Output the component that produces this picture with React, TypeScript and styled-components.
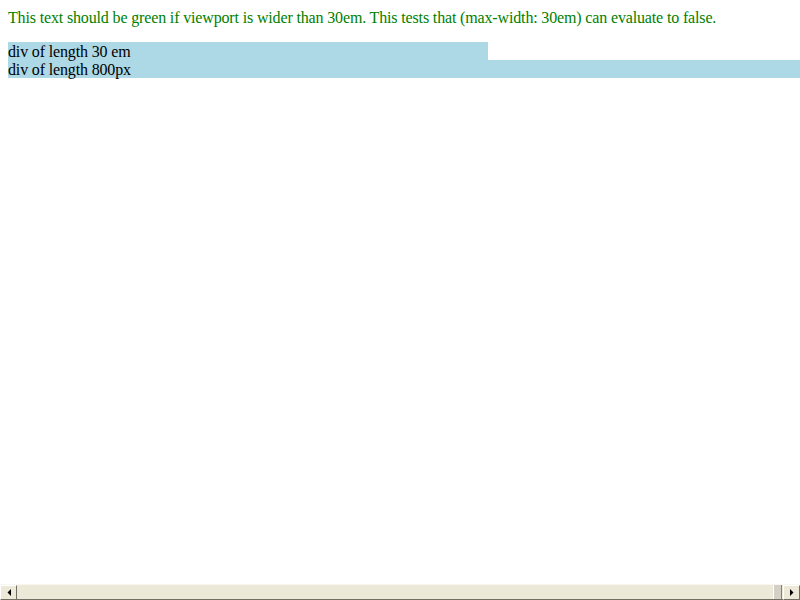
import styled, { createGlobalStyle } from "styled-components";

const GlobalStyle = createGlobalStyle`
  html, body {
    margin: 0;
    padding: 0;
    background: #ffffff;
  }
  body {
    font-family: "Liberation Serif", "Times New Roman", serif;
    font-size: 16px;
    letter-spacing: -0.15px;
    color: #000000;
  }
`;

const Viewport = styled.div`
  display: flex;
  flex-direction: column;
  width: 800px;
  height: 600px;
  overflow: hidden;
`;

const Page = styled.div`
  flex: 1;
  overflow: hidden;
  padding: 8px;
`;

const Note = styled.p`
  margin: 0 0 15px;
  padding-top: 1px;
  line-height: 18px;
  color: #008000;
  white-space: nowrap;
`;

const Bar = styled.div<{ width: string }>`
  width: ${({ width }) => width};
  height: 18px;
  line-height: 19px;
  background: #add8e6;
  white-space: nowrap;
`;

const Scrollbar = styled.div`
  display: flex;
  height: 16px;
  background: #ece9d8;
  border-top: 1px solid #f7f6f0;
  box-sizing: border-box;
`;

const ArrowButton = styled.div`
  width: 17px;
  height: 15px;
  display: flex;
  align-items: center;
  justify-content: center;
  background: #ece9d8;
  border-top: 1px solid #ffffff;
  border-left: 1px solid #ffffff;
  border-right: 1px solid #716f64;
  border-bottom: 1px solid #716f64;
  box-sizing: border-box;
`;

const Track = styled.div`
  flex: 1;
  display: flex;
  justify-content: flex-end;
  border-bottom: 1px solid #716f64;
  box-sizing: border-box;
`;

const Thumb = styled.div`
  width: 9px;
  margin-right: 1px;
  background: #d4d0c8;
  border-left: 1px solid #ffffff;
  border-right: 1px solid #808080;
  box-sizing: border-box;
`;

const Arrow = ({ dir }: { dir: "left" | "right" }) => (
  <svg width="4" height="7" viewBox="0 0 4 7">
    {dir === "left" ? (
      <polygon points="4,0 4,7 0.5,3.5" fill="#000" />
    ) : (
      <polygon points="0,0 0,7 3.5,3.5" fill="#000" />
    )}
  </svg>
);

export default function App() {
  return (
    <>
      <GlobalStyle />
      <Viewport>
        <Page>
          <Note>
            This text should be green if viewport is wider than 30em. This
            tests that (max-width: 30em) can evaluate to false.
          </Note>
          <Bar width="480px">div of length 30 em</Bar>
          <Bar width="800px">div of length 800px</Bar>
        </Page>
        <Scrollbar>
          <ArrowButton>
            <Arrow dir="left" />
          </ArrowButton>
          <Track>
            <Thumb />
          </Track>
          <ArrowButton>
            <Arrow dir="right" />
          </ArrowButton>
        </Scrollbar>
      </Viewport>
    </>
  );
}
